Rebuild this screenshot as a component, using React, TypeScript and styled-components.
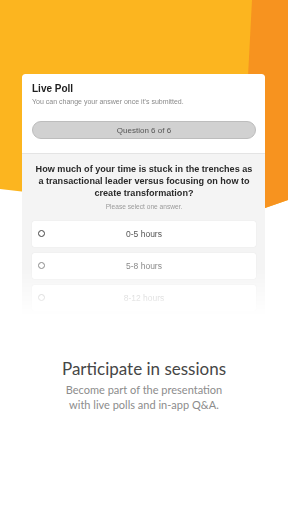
import styled, { createGlobalStyle } from "styled-components";

const GlobalStyle = createGlobalStyle`
  html, body {
    margin: 0;
    padding: 0;
    background: #ffffff;
  }
`;

const Screen = styled.div`
  position: relative;
  width: 288px;
  height: 512px;
  overflow: hidden;
  background: #ffffff;
`;

const Backdrop = styled.svg`
  position: absolute;
  left: 0;
  top: 0;
  width: 288px;
  height: 240px;
`;

const Content = styled.div`
  position: relative;
  display: flex;
  flex-direction: column;
  align-items: center;
`;

const Card = styled.div`
  width: 243px;
  margin: 74px 1px 0 0;
  background: #ffffff;
  border-radius: 3px 3px 0 0;
  box-shadow: 0 0 3px rgba(0, 0, 0, 0.12);
  font-family: "Liberation Sans", Arial, sans-serif;
  -webkit-mask-image: linear-gradient(to bottom, #000 80%, transparent 100%);
  mask-image: linear-gradient(to bottom, #000 80%, transparent 100%);
`;

const Header = styled.div`
  padding: 9px 9px 14px 10px;
  border-bottom: 1px solid #e4e4e4;
`;

const Title = styled.div`
  font-size: 10px;
  line-height: 12px;
  font-weight: 700;
  color: #1e1e1e;
`;

const Hint = styled.div`
  margin-top: 2px;
  font-size: 7px;
  line-height: 10px;
  color: #8a8a8a;
`;

const Pill = styled.div`
  margin-top: 14px;
  height: 18px;
  box-sizing: border-box;
  border: 1px solid #bdbdbd;
  border-radius: 9px;
  background: #d1d1d1;
  display: flex;
  align-items: center;
  justify-content: center;
  font-size: 8px;
  color: #555555;
`;

const Body = styled.div`
  background: #f4f4f4;
  padding: 9px 9px 5px 10px;
  display: flex;
  flex-direction: column;
`;

const Question = styled.div`
  padding: 0 2px;
  font-size: 9.1px;
  line-height: 12px;
  font-weight: 700;
  color: #2a2a2a;
  text-align: center;
`;

const Instruction = styled.div`
  margin-top: 3px;
  font-size: 6.6px;
  line-height: 9px;
  color: #9a9a9a;
  text-align: center;
`;

const Options = styled.div`
  margin-top: 10px;
  display: flex;
  flex-direction: column;
  gap: 6px;
`;

const Option = styled.div<{ $tone: string }>`
  position: relative;
  height: 26px;
  background: #ffffff;
  border-radius: 2px;
  box-shadow: 0 0 1px rgba(0, 0, 0, 0.12);
  display: flex;
  align-items: center;
  justify-content: center;
  font-size: 8.5px;
  color: ${(p) => p.$tone};
`;

const Radio = styled.span<{ $tone: string }>`
  position: absolute;
  left: 6px;
  top: 50%;
  width: 5px;
  height: 5px;
  margin-top: -4px;
  border: 1.5px solid ${(p) => p.$tone};
  border-radius: 50%;
`;

const Promo = styled.div`
  margin-top: 43px;
  display: flex;
  flex-direction: column;
  align-items: center;
  font-family: Lato, "Open Sans", sans-serif;
`;

const Heading = styled.div`
  font-size: 17px;
  line-height: 20px;
  color: #464646;
`;

const Blurb = styled.div`
  margin-top: 3px;
  font-size: 11px;
  line-height: 15px;
  color: #8c8c8c;
  text-align: center;
`;

const answers = [
  { label: "0-5 hours", text: "#555555", ring: "#444444" },
  { label: "5-8 hours", text: "#8a8a8a", ring: "#8a8a8a" },
  { label: "8-12 hours", text: "#b0b0b0", ring: "#b0b0b0" },
];

export default function App() {
  return (
    <Screen>
      <GlobalStyle />
      <Backdrop viewBox="0 0 288 240">
        <path d="M0 0 H288 V200 L265 208 Q140 206 0 189 Z" fill="#fcb51f" />
        <path d="M252 0 H288 V200 L265 208 L241 210 Z" fill="#f7931f" />
      </Backdrop>
      <Content>
        <Card>
          <Header>
            <Title>Live Poll</Title>
            <Hint>You can change your answer once it's submitted.</Hint>
            <Pill>Question 6 of 6</Pill>
          </Header>
          <Body>
            <Question>
              How much of your time is stuck in the trenches as a transactional
              leader versus focusing on how to create transformation?
            </Question>
            <Instruction>Please select one answer.</Instruction>
            <Options>
              {answers.map((a) => (
                <Option key={a.label} $tone={a.text}>
                  <Radio $tone={a.ring} />
                  {a.label}
                </Option>
              ))}
            </Options>
          </Body>
        </Card>
        <Promo>
          <Heading>Participate in sessions</Heading>
          <Blurb>
            Become part of the presentation
            <br />
            with live polls and in-app Q&amp;A.
          </Blurb>
        </Promo>
      </Content>
    </Screen>
  );
}
